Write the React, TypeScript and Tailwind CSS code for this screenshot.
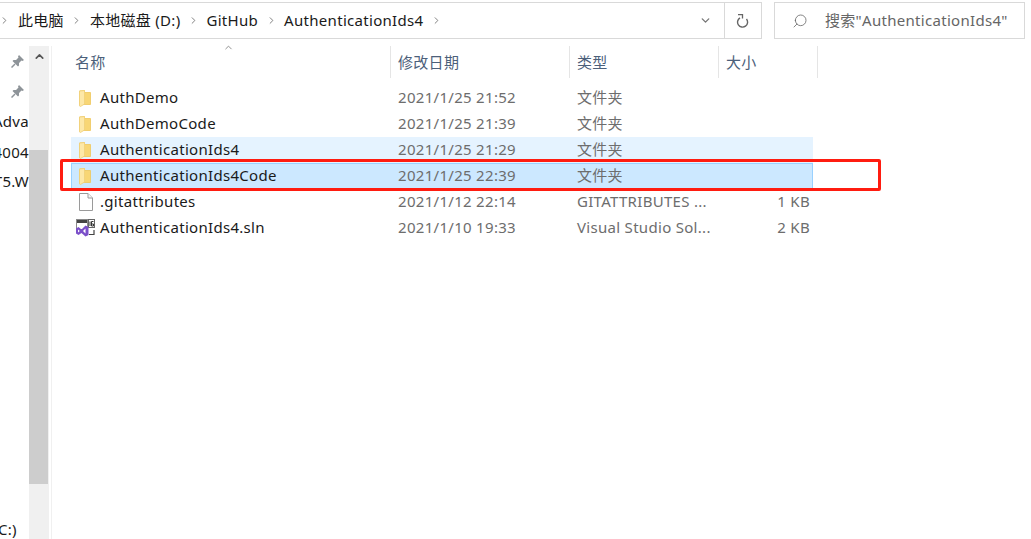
import { ChevronRight, ChevronDown, Search, ChevronUp } from "lucide-react";

const font = "font-['Noto_Sans','Noto_Sans_CJK_SC',sans-serif]";

const FolderIcon = () => (
  <svg width="12" height="17" viewBox="0 0 12 17">
    <path d="M0.5 1 L5.5 0.5 V2.5 H11.5 V14.5 H0.5 Z" fill="#f8d675" stroke="#efc65c" strokeWidth="0.8" />
    <path d="M0.5 1 L5.5 0.5 V14 L1.5 16.5 L0.5 16 Z" fill="#fde8a8" stroke="#f0cf79" strokeWidth="0.8" />
  </svg>
);

const FileIcon = () => (
  <svg width="14" height="18" viewBox="0 0 14 18">
    <path d="M0.5 0.5 H9 L13.5 5 V17.5 H0.5 Z" fill="#fff" stroke="#9a9a9a" />
    <path d="M9 0.5 V5 H13.5" fill="#f4f4f4" stroke="#9a9a9a" />
  </svg>
);

const SlnIcon = () => (
  <svg width="19" height="18" viewBox="0 0 19 18" className="-ml-[3px]">
    <rect x="0.5" y="0.5" width="11" height="10" fill="#fff" stroke="#8a8a8a" />
    <rect x="1" y="1" width="10" height="3" fill="#444" />
    <rect x="12.5" y="0.5" width="6" height="8" fill="#fff" stroke="#666" />
    <path d="M14 2.5 V7" stroke="#333" />
    <path d="M17.5 2.5 H15.5 V7 H17.5 V5 H16" stroke="#333" fill="none" />
    <path d="M18 11 V15.5 H13" stroke="#444" strokeWidth="1.2" fill="none" />
    <path d="M0 9.5 L2.5 8 L5.5 10.5 L9.5 6.5 L12.5 8 V16 L9.5 17.5 L5.5 14 L2.5 16 L0 14.5 Z" fill="#7b4fc9" />
    <path d="M2 10.5 L3.8 12 L2 13.5 Z M9.5 9.5 V14.5 L7 12 Z" fill="#fff" />
  </svg>
);

const PinIcon = () => (
  <svg width="14" height="14" viewBox="0 0 14 14">
    <path d="M8 1 L13 6 L11.5 7 L10.5 6.5 L8 9 L8 11.5 L7 12.5 L1.5 7 L2.5 6 L5 6 L7.5 3.5 L7 2.5 Z" fill="#8e9499" />
    <path d="M4 10 L0.5 13.5" stroke="#8e9499" strokeWidth="1.5" />
  </svg>
);

const RefreshIcon = () => (
  <svg width="14" height="14" viewBox="0 0 14 14" fill="none">
    <path d="M4 3.8 A5 5 0 1 0 10.5 5" stroke="#666" strokeWidth="1.4" />
    <path d="M2 0.5 H6.5 V4.5" stroke="#666" strokeWidth="1.3" />
  </svg>
);

const crumbs = ["此电脑", "本地磁盘 (D:)", "GitHub", "AuthenticationIds4"];

const rows = [
  { name: "AuthDemo", date: "2021/1/25 21:52", type: "文件夹", size: "", icon: <FolderIcon />, bg: "border-transparent" },
  { name: "AuthDemoCode", date: "2021/1/25 21:39", type: "文件夹", size: "", icon: <FolderIcon />, bg: "border-transparent" },
  { name: "AuthenticationIds4", date: "2021/1/25 21:29", type: "文件夹", size: "", icon: <FolderIcon />, bg: "bg-[#e5f3ff] border-[#e5f3ff]" },
  { name: "AuthenticationIds4Code", date: "2021/1/25 22:39", type: "文件夹", size: "", icon: <FolderIcon />, bg: "bg-[#cce8ff] border-[#99d1ff]" },
  { name: ".gitattributes", date: "2021/1/12 22:14", type: "GITATTRIBUTES ...", size: "1 KB", icon: <FileIcon />, bg: "border-transparent" },
  { name: "AuthenticationIds4.sln", date: "2021/1/10 19:33", type: "Visual Studio Sol...", size: "2 KB", icon: <SlnIcon />, bg: "border-transparent" },
];

const columns = [
  { label: "名称", width: "w-[320px]", pad: "pl-[4px]" },
  { label: "修改日期", width: "w-[179px]", pad: "pl-[7px]" },
  { label: "类型", width: "w-[149px]", pad: "pl-[7px]" },
  { label: "大小", width: "w-[99px]", pad: "pl-[7px]" },
];

const App = () => {
  return (
    <div className={`${font} relative w-[1031px] h-[539px] bg-white overflow-hidden text-[15px] tracking-[0.3px] leading-none text-[#1a1a1a]`}>
      <div className="flex h-[39px] pt-[2px] gap-[12px]">
        <div className="w-[763px] -ml-px border border-l-0 border-[#d9d9d9] flex items-center">
          <div className="flex-1 flex items-center">
            <ChevronRight size={11} className="text-[#777] mr-[8px]" />
            {crumbs.map((c) => (
              <div key={c} className="flex items-center">
                <span className="whitespace-nowrap">{c}</span>
                <ChevronRight size={11} className="text-[#777] mx-[7.5px]" />
              </div>
            ))}
          </div>
          <div className="w-[37px] flex justify-center">
            <ChevronDown size={13} strokeWidth={2.5} className="text-[#777]" />
          </div>
          <div className="w-[37px] h-full border-l border-[#d9d9d9] flex items-center justify-center">
            <RefreshIcon />
          </div>
        </div>
        <div className="w-[251px] border border-[#d9d9d9] flex items-center pl-[17px]">
          <Search size={16} strokeWidth={1.2} className="text-[#666] -scale-x-100 mr-[17px]" />
          <span className="text-[#666] whitespace-nowrap">搜索"AuthenticationIds4"</span>
        </div>
      </div>

      <div className="flex h-[500px] pt-[7px]">
        <div className="w-[29px] shrink-0">
          <div className="h-[30px] flex justify-end items-center pr-[4px]">
            <PinIcon />
          </div>
          <div className="h-[30px] flex justify-end items-center pr-[4px]">
            <PinIcon />
          </div>
          <div className="h-[31px] flex justify-end items-center overflow-hidden whitespace-nowrap">Adva</div>
          <div className="h-[30px] flex justify-end items-center overflow-hidden whitespace-nowrap">4004</div>
          <div className="h-[29px] flex justify-end items-center overflow-hidden whitespace-nowrap">T5.W</div>
          <div className="mt-[326px] -ml-[2px] whitespace-nowrap">C:)</div>
        </div>

        <div className="w-[20px] shrink-0 bg-[#f0f0f0] flex flex-col">
          <div className="h-[21px] flex items-center justify-center">
            <ChevronUp size={13} strokeWidth={3} className="text-[#555]" />
          </div>
          <div className="h-[83px]" />
          <div className="h-[334px] w-[19px] bg-[#cdcdcd]" />
        </div>

        <div className="w-[2px] shrink-0" />
        <div className="w-px shrink-0 bg-[#f0f0f0]" />

        <div className="flex-1 pl-[19px] min-w-0">
          <div className="relative flex h-[32px]">
            <ChevronUp size={11} className="absolute left-[152px] -top-[4px] text-[#888]" />
            {columns.map((col) => (
              <div key={col.label} className={`${col.width} ${col.pad} h-full border-r border-[#e5e5e5] flex items-center text-[#4c607a]`}>
                {col.label}
              </div>
            ))}
          </div>
          <div className="w-[742px] mt-[7px]">
            {rows.map((r) => (
              <div key={r.name} className={`flex items-center h-[26px] border ${r.bg}`}>
                <div className="w-[28px] pl-[7px] flex items-center justify-start">{r.icon}</div>
                <div className="w-[298px] pb-[2px] whitespace-nowrap">{r.name}</div>
                <div className="w-[179px] pb-[2px] text-[#6d6d6d] whitespace-nowrap">{r.date}</div>
                <div className="w-[142px] pb-[2px] text-[#6d6d6d] whitespace-nowrap">{r.type}</div>
                <div className="w-[91px] pb-[2px] text-right text-[#6d6d6d] whitespace-nowrap">{r.size}</div>
              </div>
            ))}
          </div>
        </div>
      </div>

      <div className="absolute left-[60px] top-[159px] w-[821px] h-[32px] border-[3px] border-[#ff1c10] rounded-[2px]" />
    </div>
  );
};

export default App;
